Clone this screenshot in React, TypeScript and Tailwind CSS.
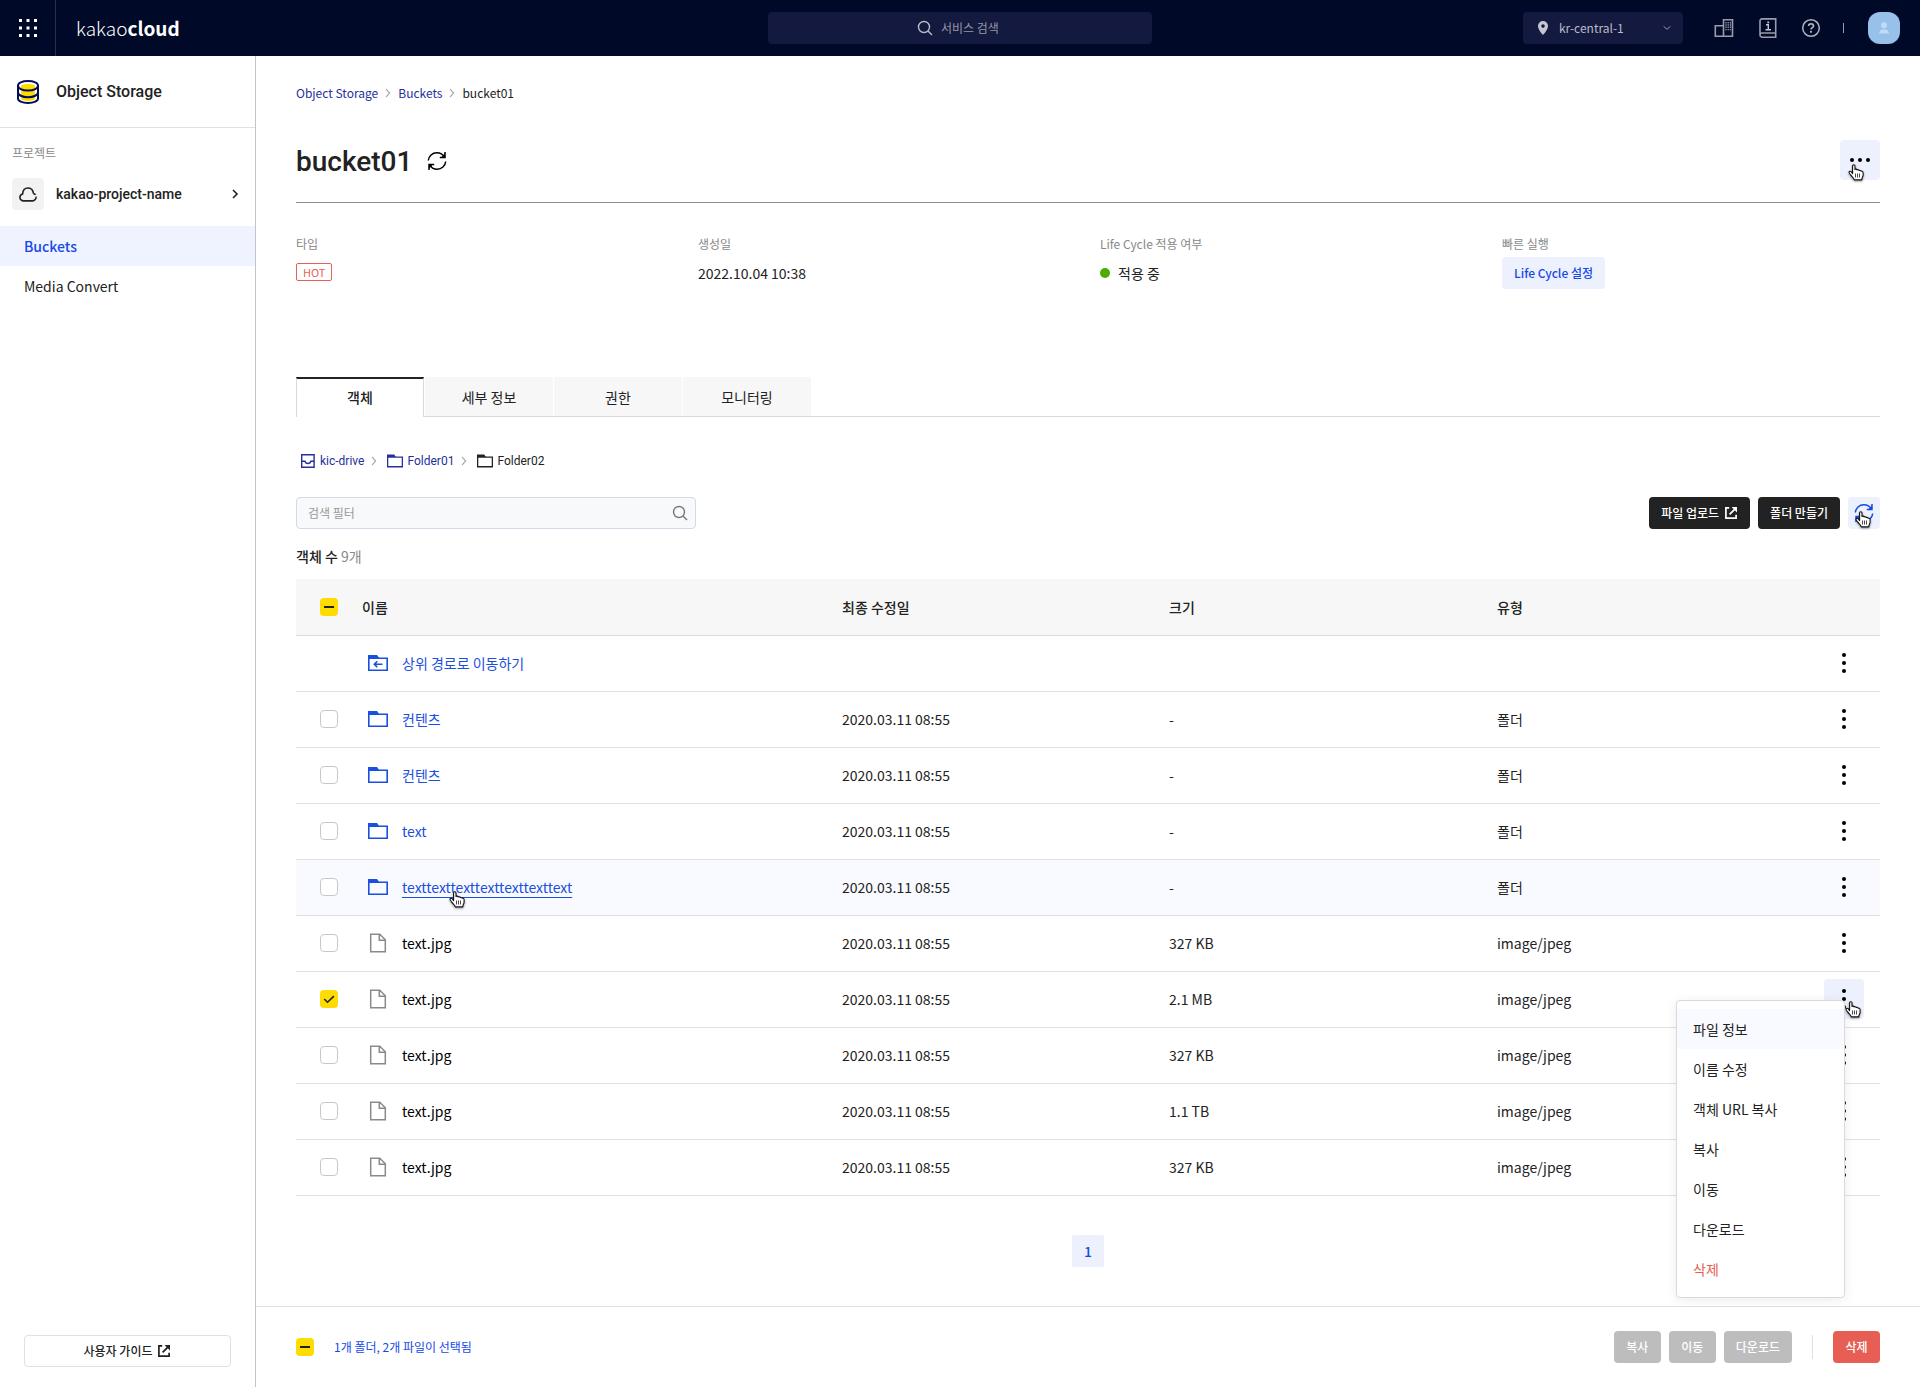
import { useState } from "react";

const CRUMBS = ["Object Storage", "Buckets"];
const TABS = ["객체", "세부 정보", "권한", "모니터링"];
const MENU = ["파일 정보", "이름 수정", "객체 URL 복사", "복사", "이동", "다운로드", "삭제"];
const BULK_ACTIONS = ["복사", "이동", "다운로드"];

type Row = { id: string; name: string; kind: "up" | "folder" | "file"; date?: string; size?: string; type?: string };

const ROWS: Row[] = [
  { id: "r0", name: "상위 경로로 이동하기", kind: "up" },
  { id: "r1", name: "컨텐츠", kind: "folder", date: "2020.03.11 08:55", size: "-", type: "폴더" },
  { id: "r2", name: "컨텐츠", kind: "folder", date: "2020.03.11 08:55", size: "-", type: "폴더" },
  { id: "r3", name: "text", kind: "folder", date: "2020.03.11 08:55", size: "-", type: "폴더" },
  { id: "r4", name: "texttexttexttexttexttexttext", kind: "folder", date: "2020.03.11 08:55", size: "-", type: "폴더" },
  { id: "r5", name: "text.jpg", kind: "file", date: "2020.03.11 08:55", size: "327 KB", type: "image/jpeg" },
  { id: "r6", name: "text.jpg", kind: "file", date: "2020.03.11 08:55", size: "2.1 MB", type: "image/jpeg" },
  { id: "r7", name: "text.jpg", kind: "file", date: "2020.03.11 08:55", size: "327 KB", type: "image/jpeg" },
  { id: "r8", name: "text.jpg", kind: "file", date: "2020.03.11 08:55", size: "1.1 TB", type: "image/jpeg" },
  { id: "r9", name: "text.jpg", kind: "file", date: "2020.03.11 08:55", size: "327 KB", type: "image/jpeg" },
];

function HandPointer({ className }: { className: string }) {
  return (
    <svg
      className={`pointer-events-none absolute z-20 drop-shadow-[0_1px_1px_rgba(0,0,0,0.4)] ${className}`}
      width="16"
      height="17"
      viewBox="0 0 16 17"
      aria-hidden="true"
    >
      <path
        d="M4.6 9.6V2.1C4.6 1.2 5.1.7 5.8.7S7 1.2 7 2.1v3.3c.3-.4 1.8-.4 2.1.5.5-.4 1.8-.3 2.1.6.5-.3 1.6-.1 2 .7.9-.2 1.9.2 1.9 1.5v2.6c0 1.5-1.3 2.3-1.3 4.6H6.3c-.5-1.7-2.3-3-3.7-5C1.7 9.7.9 8.9 1 8.1c.2-.9 1.5-1 2.2-.4z"
        fill="#fff"
        stroke="#111"
        strokeWidth="1.1"
        strokeLinejoin="round"
      />
      <path d="M7.5 9.5v4M9.5 9.5v4M11.5 9.5v4" stroke="#333" strokeWidth=".9" />
    </svg>
  );
}

function Refresh() {
  return (
    <svg width="20" height="20" viewBox="0 0 20 20" fill="none" stroke="currentColor" strokeWidth="1.5" aria-hidden="true">
      <path d="M1.3 9.5C1.8 5 5.3 1.8 9.8 1.8c3.4 0 6.2 1.7 7.7 4.6M18.7 10.5c-.5 4.5-4 7.7-8.500 7.700-3.400 0-6.200-1.700-7.700-4.600" />
      <path d="M18 1v5.600h-5.200M2 19v-5.600h5.200" />
      <path d="M18 2.600v4h-4zM2 17.400v-4h4z" fill="currentColor" stroke="none" />
    </svg>
  );
}

function Chevron({ className, size = 10 }: { className?: string; size?: number }) {
  return (
    <svg className={className} width={size} height={size} viewBox="0 0 10 10" fill="none" stroke="currentColor" strokeWidth="1.2" aria-hidden="true">
      <path d="M3 .8 6.600 5 3 9.200" />
    </svg>
  );
}

function SearchIcon() {
  return (
    <svg width="16" height="16" viewBox="0 0 16 16" fill="none" stroke="currentColor" strokeWidth="1.4" aria-hidden="true">
      <circle cx="7" cy="7" r="5.5" />
      <path d="m11 11 4 4" />
    </svg>
  );
}

function ExternalIcon() {
  return (
    <svg width="14" height="14" viewBox="0 0 14 14" fill="none" stroke="currentColor" strokeWidth="1.7" aria-hidden="true">
      <path d="M5.2 1.9H1.9v10.2h10.2V8.8M5.6 8.4l6-6" />
      <path d="M7.6 1H13v5.4l-1.9-1.8-1.800-1.900z" fill="currentColor" stroke="none" />
    </svg>
  );
}

function FolderIcon({ up, small }: { up?: boolean; small?: boolean }) {
  return (
    <svg width={small ? 16 : 20} height={small ? 14 : 16} viewBox="0 0 20 16" fill="none" aria-hidden="true">
      <path d="M0 0h9l2.200 3H0z" fill="currentColor" />
      <path d="M.8 3.200h18.400v12H.8z" stroke="currentColor" strokeWidth="1.6" />
      {up && <path d="M14.500 9.200h-8M9.300 6.200l-3 3 3 3" stroke="currentColor" strokeWidth="1.6" />}
    </svg>
  );
}

function FileIcon() {
  return (
    <svg className="text-[#8a8a8a]" width="20" height="20" viewBox="0 0 20 20" fill="none" stroke="currentColor" strokeWidth="1.5" aria-hidden="true">
      <path d="M2.700 1.200h9.100l5.500 5.500v12.100H2.700z" />
      <path d="M11.300 1.200v6h6" />
    </svg>
  );
}

function MoreDots() {
  return (
    <svg width="4" height="20" viewBox="0 0 4 20" fill="#000" aria-hidden="true">
      <circle cx="2" cy="2" r="2" />
      <circle cx="2" cy="10" r="2" />
      <circle cx="2" cy="18" r="2" />
    </svg>
  );
}

function Checkbox({ label, state, onChange }: { label: string; state: "on" | "off" | "mixed"; onChange?: () => void }) {
  return (
    <span className="relative block size-[18px]">
      <input
        type="checkbox"
        aria-label={label}
        checked={state === "on"}
        onChange={() => onChange?.()}
        className={`block size-[18px] appearance-none rounded ${
          state === "off" ? "border border-[#c8c8c8] bg-white" : "bg-[#ffdc00]"
        }`}
      />
      {state !== "off" && (
        <svg className="pointer-events-none absolute inset-0" width="18" height="18" viewBox="0 0 18 18" fill="none" stroke="#222" aria-hidden="true">
          {state === "on" ? <path d="m4.200 9 3.300 3.300 6.400-6.200" strokeWidth="1.5" /> : <path d="M4 9h10" strokeWidth="2" />}
        </svg>
      )}
    </span>
  );
}

function TopBar() {
  return (
    <header className="grid h-14 grid-cols-[1fr_384px_1fr] items-center bg-[#000927]">
      <div className="flex h-full items-center">
        <button type="button" aria-label="전체 서비스" className="flex h-full w-14 items-center justify-center border-r border-[#292e49]">
          <svg width="18" height="18" viewBox="0 0 18 18" fill="#fff" aria-hidden="true">
            {[0, 7.5, 15].map((y) => [0, 7.5, 15].map((x) => <rect key={`${x}-${y}`} x={x} y={y} width="3" height="3" />))}
          </svg>
        </button>
        <a href="#" className="ml-5 text-[19px] leading-6 font-light text-white">
          kakao<b className="font-bold">cloud</b>
        </a>
      </div>
      <label className="flex h-8 items-center justify-center gap-2 rounded bg-[#14193f] text-[#b9bbc8]">
        <SearchIcon />
        <input aria-label="서비스 검색" placeholder="서비스 검색" className="w-[62px] bg-transparent text-xs outline-none placeholder:text-[#9497a8]" />
      </label>
      <div className="flex items-center justify-end pr-5 text-[#9a9caa]">
        <div className="relative mr-[31px] w-40">
          <svg className="absolute top-2 left-[14px]" width="12" height="16" viewBox="0 0 12 16" fill="#c5c7d0" aria-hidden="true">
            <path fillRule="evenodd" d="M6 1a5 5 0 0 0-5 5c0 3.700 5 9 5 9s5-5.300 5-9a5 5 0 0 0-5-5zm0 3.300a1.800 1.800 0 1 1 0 3.600 1.800 1.800 0 0 1 0-3.600z" />
          </svg>
          <select aria-label="리전" className="h-8 w-full appearance-none rounded bg-[#14193f] pl-9 text-xs text-[#b9bbc8]">
            <option>kr-central-1</option>
          </select>
          <Chevron size={8} className="pointer-events-none absolute top-3 right-3 rotate-90" />
        </div>
        <button type="button" aria-label="조직" className="mr-6">
          <svg width="20" height="20" viewBox="0 0 20 20" fill="none" stroke="currentColor" strokeWidth="1.6" aria-hidden="true">
            <path d="M1.300 18.200V7.800h8.200v10.400zM9.500 18.200V1.800h9v16.400z" />
            <path d="M12 4v8.500M14.200 4v8.500M16.400 4v8.500" strokeWidth="1.2" strokeDasharray="1.400 .9" />
          </svg>
        </button>
        <button type="button" aria-label="문서" className="mr-[23px]">
          <svg width="20" height="20" viewBox="0 0 20 20" fill="none" stroke="currentColor" strokeWidth="1.6" aria-hidden="true">
            <path d="M17.700 15V.9H4A2 2 0 0 0 2 3v14a2.200 2.200 0 0 0 2.200 2.200h13.500V15H4a2 2 0 0 0-2 2" />
            <path d="M8 6.800h2.300v4.700M7.500 11.700H13" stroke="#c5c7d0" strokeWidth="1.4" />
            <path d="M9.300 3.500h1.900v1.800H9.300z" fill="#c5c7d0" stroke="none" />
          </svg>
        </button>
        <button type="button" aria-label="도움말" className="mr-[22px] text-[#b0b2be]">
          <svg width="20" height="20" viewBox="0 0 20 20" fill="none" stroke="currentColor" strokeWidth="1.5" aria-hidden="true">
            <circle cx="10" cy="10" r="8.300" />
            <path d="M7.600 8.100c0-1.400 1-2.300 2.400-2.300s2.500.8 2.500 2.100c0 1.700-2.500 1.800-2.500 3.600" strokeWidth="1.7" />
            <circle cx="10" cy="13.800" r="1.100" fill="currentColor" stroke="none" />
          </svg>
        </button>
        <span className="mr-6 h-[10px] w-px bg-[#9a9caa]" />
        <button type="button" aria-label="내 계정" className="flex size-8 items-center justify-center rounded-xl bg-[#98c1e9]">
          <svg width="10" height="12" viewBox="0 0 10 12" fill="#bcdcf8" aria-hidden="true">
            <circle cx="5" cy="3.200" r="3" />
            <path d="M0 11.500C0 8.800 2 7.300 5 7.300s5 1.500 5 4.200z" />
          </svg>
        </button>
      </div>
    </header>
  );
}

function Sidebar() {
  return (
    <aside className="flex w-64 shrink-0 flex-col border-r border-[#c4c4c4]">
      <div className="flex h-[72px] items-center gap-4 border-b border-[#e1e1e1] px-4">
        <svg width="24" height="24" viewBox="0 0 24 24" fill="none" stroke="#000d5c" strokeWidth="2" aria-hidden="true">
          <path d="M5 5.500c2.500-2 11.500-2 14 0V19c-2.500 2.500-11.500 2.500-14 0z" fill="#ffdc00" stroke="none" />
          <path d="M2 5.500C2 3 6 1 12 1s10 2 10 4.500v13c0 2.500-4 4.500-10 4.500S2 21 2 18.500zM2 5.500c0 2.800 4 5 10 5s10-2.200 10-5M2 12.200c0 2.800 4 5 10 5s10-2.200 10-5" />
        </svg>
        <h2 className="font-[Roboto,sans-serif] text-base font-medium">Object Storage</h2>
      </div>
      <p className="mt-[15px] px-3 text-xs leading-5 text-[#888]">프로젝트</p>
      <button type="button" className="mt-[15px] mb-4 flex h-8 items-center px-3">
        <span className="flex size-8 items-center justify-center rounded bg-[#f2f2f2]">
          <svg width="18" height="15" viewBox="0 0 18 15" fill="none" stroke="#222" strokeWidth="1.6" aria-hidden="true">
            <path d="M17 9.700a3.600 3.600 0 0 1-3.500 4.200H4.600A3.600 3.600 0 0 1 .9 10.400c0-1.700 1.100-3 2.700-3.400C3.800 3.600 5.800 1 9 1c2.500 0 4.500 1.600 5.100 4 .1.500.2.900.2 1.400" />
            <path d="M14.300 6.500c.9.200 1.700.7 2.200 1.400" />
          </svg>
        </span>
        <span className="ml-3 font-[Roboto,sans-serif] text-sm font-medium">kakao-project-name</span>
        <svg className="mr-1 ml-auto" width="8" height="10" viewBox="0 0 8 10" fill="none" stroke="#222" strokeWidth="1.6" aria-hidden="true">
          <path d="m2 1 4 4-4 4" />
        </svg>
      </button>
      <nav className="flex flex-col text-sm">
        <a href="#" className="bg-[#eff3ff] px-6 leading-10 font-medium text-[#1549e8]">Buckets</a>
        <a href="#" className="px-6 leading-10">Media Convert</a>
      </nav>
      <a href="#" className="mx-6 mt-auto mb-5 flex h-8 items-center justify-center gap-[5px] rounded border border-[#e1e1e1] text-xs font-medium">
        사용자 가이드 <ExternalIcon />
      </a>
    </aside>
  );
}

export default function App() {
  const [checked, setChecked] = useState<string[]>(["r6"]);
  const [tab, setTab] = useState("객체");

  const toggle = (id: string) => {
    setChecked((prev) => (prev.includes(id) ? prev.filter((x) => x !== id) : [...prev, id]));
  };

  return (
    <div className="flex min-h-screen flex-col bg-white font-['Noto_Sans_CJK_KR',sans-serif] text-[#222]">
      <TopBar />
      <div className="flex flex-1">
        <Sidebar />
        <div className="flex min-w-0 flex-1 flex-col">
          <main className="px-10 pt-[27px]">
            <nav aria-label="경로" className="flex items-center text-xs leading-5">
              {CRUMBS.map((c) => (
                <span key={c} className="flex items-center">
                  <a href="#" className="text-[#26309c]">{c}</a>
                  <Chevron className="mx-[5px] text-[#aaa]" />
                </span>
              ))}
              <span>bucket01</span>
            </nav>

            <div className="mt-[37px] flex h-[63px] items-start border-b border-[#8e8e8e]">
              <h1 className="font-[Roboto,sans-serif] text-[28px] leading-[44px] font-medium">bucket01</h1>
              <button type="button" aria-label="새로고침" className="ml-[15px] flex h-[42px] items-center text-black">
                <Refresh />
              </button>
              <button type="button" aria-label="더보기" className="relative ml-auto flex size-10 items-center justify-center rounded bg-[#edf1fd]">
                <span className="rotate-90">
                  <MoreDots />
                </span>
                <HandPointer className="top-6 left-2" />
              </button>
            </div>

            <dl className="mt-[31px] grid grid-cols-4 gap-x-6">
              <div>
                <dt className="text-xs leading-5 text-[#888]">타입</dt>
                <dd className="mt-[9px] flex">
                  <span className="rounded-xs border border-[#e95f54] px-[6px] text-[11px] leading-4 text-[#e95f54]">HOT</span>
                </dd>
              </div>
              <div>
                <dt className="text-xs leading-5 text-[#888]">생성일</dt>
                <dd className="mt-[7px] text-sm leading-6">2022.10.04 10:38</dd>
              </div>
              <div>
                <dt className="text-xs leading-5 text-[#888]">Life Cycle 적용 여부</dt>
                <dd className="mt-[7px] flex items-center gap-2 text-sm leading-6">
                  <span className="size-[10px] rounded-full bg-[#4eab00]" />
                  적용 중
                </dd>
              </div>
              <div>
                <dt className="text-xs leading-5 text-[#888]">빠른 실행</dt>
                <dd className="mt-[3px]">
                  <button type="button" className="h-8 rounded bg-[#edf1fd] px-3 text-xs font-medium text-[#1549e8]">
                    Life Cycle 설정
                  </button>
                </dd>
              </div>
            </dl>

            <div role="tablist" className="mt-[88px] flex h-10 gap-px border-b border-[#dadada] text-sm">
              {TABS.map((t) => (
                <button
                  key={t}
                  type="button"
                  role="tab"
                  aria-selected={tab === t}
                  onClick={() => setTab(t)}
                  className={
                    tab === t
                      ? "h-10 w-32 border-x border-t-2 border-x-[#dadada] border-t-[#222] bg-white pb-[3px] font-medium"
                      : "h-[39px] w-32 rounded-t-xs bg-[#f7f7f7]"
                  }
                >
                  {t}
                </button>
              ))}
            </div>

            <nav aria-label="폴더 경로" className="mt-[34px] flex items-center pl-1 font-[Roboto,sans-serif] text-xs leading-5 text-[#26309c]">
              <a href="#" className="flex items-center gap-1">
                <svg width="16" height="14" viewBox="0 0 16 14" fill="none" stroke="currentColor" strokeWidth="1.4" aria-hidden="true">
                  <path d="M1.700.7h12.400v12.600H1.700zM1.700 7.200h3.200c.3 1.500 1.400 2.300 3 2.300s2.700-.8 3-2.300h3.200" />
                </svg>
                kic-drive
              </a>
              <Chevron className="mr-2 ml-[5px] text-[#aaa]" />
              <a href="#" className="flex items-center gap-1">
                <FolderIcon small />
                Folder01
              </a>
              <Chevron className="mr-2 ml-[5px] text-[#aaa]" />
              <span className="flex items-center gap-1 text-[#222]">
                <FolderIcon small />
                Folder02
              </span>
            </nav>

            <div className="mt-[26px] flex items-center gap-2">
              <label className="mr-auto flex h-8 w-[400px] items-center rounded border border-[#d5d9e5] bg-[#f8f9fb] pr-[7px] pl-[11px] text-[#777]">
                <input aria-label="검색 필터" placeholder="검색 필터" className="min-w-0 flex-1 bg-transparent text-xs outline-none placeholder:text-[#999]" />
                <SearchIcon />
              </label>
              <button type="button" className="flex h-8 items-center gap-[5px] rounded bg-[#222] px-3 text-xs font-medium text-white">
                파일 업로드 <ExternalIcon />
              </button>
              <button type="button" className="h-8 rounded bg-[#222] px-3 text-xs font-medium text-white">폴더 만들기</button>
              <button type="button" aria-label="목록 새로고침" className="relative flex size-8 items-center justify-center rounded bg-[#edf1fd] text-[#1549e8]">
                <Refresh />
                <HandPointer className="top-[14px] left-[7px]" />
              </button>
            </div>

            <p className="mt-[17px] text-sm leading-5 font-medium">
              객체 수 <span className="font-normal text-[#888]">9개</span>
            </p>

            <table className="mt-[13px] w-full table-fixed border-collapse text-sm">
              <colgroup>
                <col className="w-[66px]" />
                <col />
                <col className="w-[327px]" />
                <col className="w-[328px]" />
                <col className="w-[307px]" />
                <col className="w-[76px]" />
              </colgroup>
              <thead>
                <tr className="h-14 border-b border-[#dadada] bg-[#f7f7f7] text-left">
                  <th className="pl-6">
                    <Checkbox label="전체 선택" state="mixed" />
                  </th>
                  <th className="font-medium">이름</th>
                  <th className="font-medium">최종 수정일</th>
                  <th className="font-medium">크기</th>
                  <th className="font-medium">유형</th>
                  <th />
                </tr>
              </thead>
              <tbody>
                {ROWS.map((r) => {
                  const hovered = r.id === "r4";
                  const open = r.id === "r6";
                  return (
                    <tr key={r.id} className={`h-14 border-b border-[#e1e1e1] ${hovered ? "bg-[#f9faff]" : ""}`}>
                      <td className="pl-6">
                        {r.kind !== "up" && (
                          <Checkbox label={`${r.name} 선택`} state={checked.includes(r.id) ? "on" : "off"} onChange={() => toggle(r.id)} />
                        )}
                      </td>
                      <td>
                        {r.kind === "file" ? (
                          <div className="flex items-center gap-[14px] pl-[6px] text-black">
                            <FileIcon />
                            {r.name}
                          </div>
                        ) : (
                          <div className="flex items-center gap-[14px] pl-[6px] text-[#1a4fe0]">
                            <FolderIcon up={r.kind === "up"} />
                            <a href="#" className={`relative ${hovered ? "underline underline-offset-4" : ""}`}>
                              {r.name}
                              {hovered && <HandPointer className="top-[14px] left-[47px]" />}
                            </a>
                          </div>
                        )}
                      </td>
                      <td>{r.date}</td>
                      <td>{r.size}</td>
                      <td>{r.type}</td>
                      <td>
                        <div className="relative ml-5 w-10">
                          <button
                            type="button"
                            aria-label={`${r.name} 메뉴`}
                            className={`flex size-10 items-center justify-center rounded ${open ? "bg-[#edf1fd]" : ""}`}
                          >
                            <MoreDots />
                          </button>
                          {open && (
                            <>
                              <ul className="absolute top-[21px] right-[19px] z-10 w-[169px] rounded border border-[#dadada] bg-white py-2 shadow-[0_2px_12px_rgba(0,0,0,0.08)]">
                                {MENU.map((m, i) => (
                                  <li key={m}>
                                    <button
                                      type="button"
                                      className={`block h-10 w-full px-4 text-left ${i === 0 ? "bg-[#f9faff]" : ""} ${m === "삭제" ? "text-[#e95f54]" : ""}`}
                                    >
                                      {m}
                                    </button>
                                  </li>
                                ))}
                              </ul>
                              <HandPointer className="top-[22px] left-[21px]" />
                            </>
                          )}
                        </div>
                      </td>
                    </tr>
                  );
                })}
              </tbody>
            </table>

            <nav aria-label="페이지" className="my-[39px] flex justify-center">
              <a href="#" className="flex size-8 items-center justify-center rounded-xs bg-[#edf1fd] text-sm font-medium text-[#1549e8]">1</a>
            </nav>
          </main>

          <footer className="mt-auto flex h-[81px] items-center border-t border-[#e1e1e1] px-10 text-xs">
            <Checkbox label="선택 항목" state="mixed" />
            <p className="mr-auto ml-5 text-[#1549e8]">1개 폴더, 2개 파일이 선택됨</p>
            <div className="flex gap-2 font-medium text-white">
              {BULK_ACTIONS.map((a) => (
                <button key={a} type="button" className="h-8 min-w-[47px] rounded bg-[#bdbdbd] px-3">{a}</button>
              ))}
            </div>
            <span className="mx-5 h-6 w-px bg-[#e1e1e1]" />
            <button type="button" className="h-8 min-w-[47px] rounded bg-[#e75f54] px-3 font-medium text-white">삭제</button>
          </footer>
        </div>
      </div>
    </div>
  );
}
